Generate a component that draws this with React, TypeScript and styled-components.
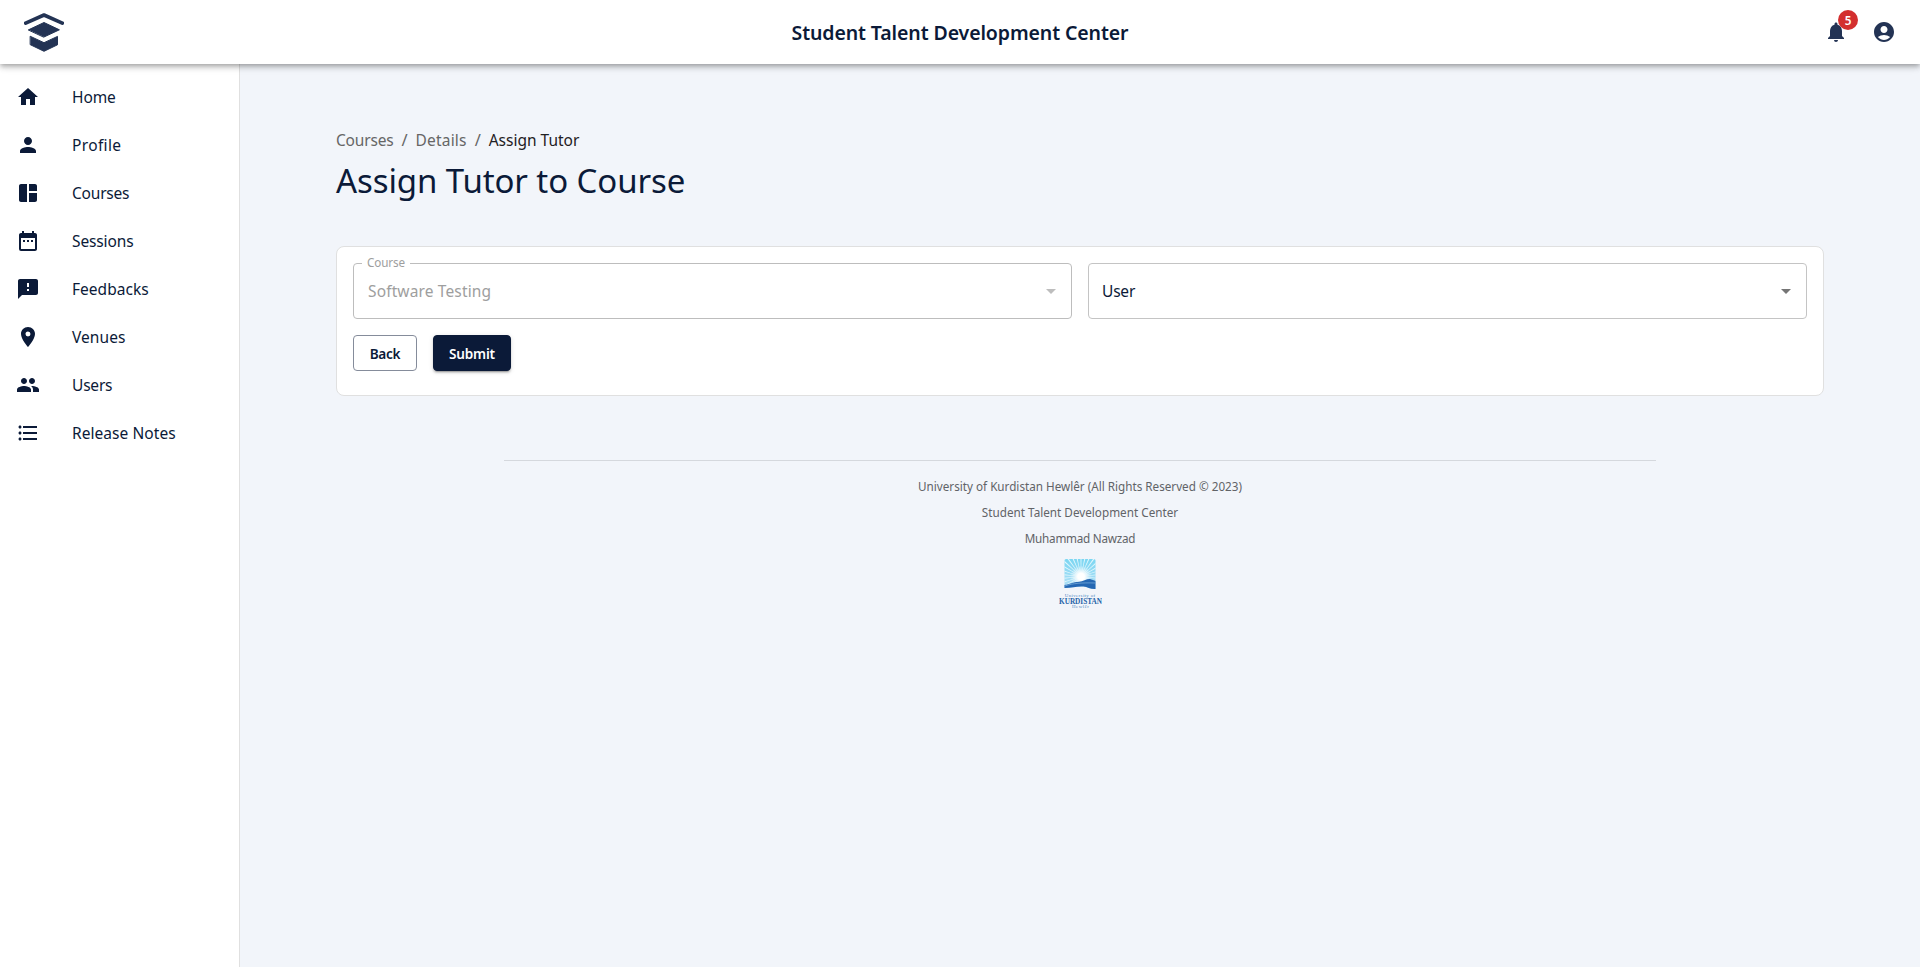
import React from 'react';
import styled, { createGlobalStyle } from 'styled-components';
import type { IconType } from 'react-icons';
import {
  MdAccountCircle,
  MdArrowDropDown,
  MdDateRange,
  MdFeedback,
  MdFormatListBulleted,
  MdHome,
  MdLocationOn,
  MdNotifications,
  MdPeople,
  MdPerson,
  MdSpaceDashboard,
} from 'react-icons/md';

const navy = '#0b1a38';
const slate = '#233354';

const GlobalStyle = createGlobalStyle`
  *, *::before, *::after { box-sizing: border-box; }
  body {
    margin: 0;
    background: #f2f5fa;
    color: ${navy};
    font-family: 'Noto Sans', 'Open Sans', sans-serif;
    font-size: 15.5px;
    line-height: 24px;
  }
`;

const Page = styled.div`
  display: flex;
  flex-direction: column;
  min-height: 100vh;
`;

const Tracked = styled.span<{ $tracking?: number }>`
  letter-spacing: ${({ $tracking = 0 }) => $tracking}px;
  white-space: nowrap;
`;

const AppBar = styled.header`
  position: relative;
  z-index: 2;
  display: grid;
  grid-template-columns: 1fr auto 1fr;
  align-items: center;
  height: 64px;
  padding: 0 24px;
  background: #fff;
  box-shadow: 0 2px 4px -1px rgba(0, 0, 0, 0.2), 0 4px 5px rgba(0, 0, 0, 0.14),
    0 1px 10px rgba(0, 0, 0, 0.12);
`;

const BrandMark = styled.svg`
  display: block;
  width: 40px;
  height: 40px;
`;

const AppTitle = styled.div`
  padding-top: 1px;
  font-size: 19.5px;
  font-weight: 600;
  line-height: 32px;
`;

const Actions = styled.div`
  display: flex;
  justify-content: flex-end;
  gap: 24px;
  color: ${slate};
`;

const ActionButton = styled.button`
  position: relative;
  display: flex;
  padding: 0;
  border: 0;
  background: none;
  color: inherit;
  font-family: inherit;
`;

const Badge = styled.span`
  position: absolute;
  top: -10px;
  right: -10px;
  width: 20px;
  height: 20px;
  border-radius: 10px;
  background: #d32f2f;
  color: #fff;
  font-size: 11.7px;
  font-weight: 600;
  line-height: 21px;
  text-align: center;
`;

const Body = styled.div`
  display: flex;
  flex: 1;
`;

const Sidebar = styled.nav`
  width: 240px;
  flex: none;
  padding-top: 9px;
  border-right: 1px solid #e0e0e0;
  background: #fff;
`;

const NavItem = styled.a`
  display: flex;
  align-items: center;
  gap: 32px;
  height: 48px;
  padding: 0 16px;
  color: ${navy};

  svg { flex: none; }
`;

const Main = styled.main`
  flex: 1;
  padding: 64px 96px 0;
`;

const Breadcrumbs = styled.div`
  display: flex;
  height: 24px;
  color: #666;
`;

const Separator = styled.span`
  width: 6px;
  margin: 0 8px;
  font-size: 16.5px;
  text-align: center;
`;

const Current = styled.span`
  color: #1f2023;
`;

const Heading = styled.h1`
  margin: 7px 0 44px;
  font-size: 33px;
  font-weight: 400;
  line-height: 43px;
`;

const Card = styled.section`
  padding: 16px 16px 24px;
  border: 1px solid #e0e0e0;
  border-radius: 8px;
  background: #fff;
`;

const FieldGrid = styled.div`
  display: grid;
  grid-template-columns: 1fr 1fr;
  gap: 16px;
`;

const Field = styled.div<{ $disabled?: boolean }>`
  position: relative;
  display: flex;
  align-items: center;
  justify-content: space-between;
  height: 56px;
  padding: 0 8px 1px ${({ $disabled }) => ($disabled ? 14 : 13)}px;
  border: 1px solid ${({ $disabled }) => ($disabled ? '#bdbdbd' : '#c4c4c4')};
  border-radius: 4px;
  color: ${({ $disabled }) => ($disabled ? '#9e9e9e' : navy)};

  svg {
    margin-top: 1px;
    color: ${({ $disabled }) => ($disabled ? '#bdbdbd' : '#757575')};
  }
`;

const FieldLabel = styled.label`
  position: absolute;
  top: -12px;
  left: 8px;
  width: 48px;
  background: #fff;
  font-size: 11.7px;
  line-height: 20px;
  text-align: center;
`;

const ButtonRow = styled.div`
  display: flex;
  gap: 16px;
  margin-top: 16px;
`;

const Button = styled.button<{ $primary?: boolean }>`
  height: 36px;
  width: ${({ $primary }) => ($primary ? 78 : 64)}px;
  padding: 1px 0 0;
  border: 1px solid ${({ $primary }) => ($primary ? navy : '#858c9b')};
  border-radius: 4px;
  background: ${({ $primary }) => ($primary ? navy : '#fff')};
  color: ${({ $primary }) => ($primary ? '#fff' : navy)};
  box-shadow: ${({ $primary }) =>
    $primary
      ? '0 3px 1px -2px rgba(0,0,0,.2), 0 2px 2px rgba(0,0,0,.14), 0 1px 5px rgba(0,0,0,.12)'
      : 'none'};
  font-family: inherit;
  font-size: 13.6px;
  font-weight: 600;
  line-height: 24px;
`;

const Footer = styled.footer`
  display: flex;
  flex-direction: column;
  align-items: center;
  width: 1152px;
  margin: 64px auto 0;
  padding-top: 12px;
  border-top: 1px solid #d5d8dd;
  color: #616367;
  font-size: 11.7px;
  line-height: 26px;
`;

const Crest = styled.svg`
  display: block;
  width: 44px;
  height: 52px;
  margin: 7px 1px 0 0;
`;

type NavEntry = { label: string; icon: IconType; tracking: number };

const navEntries: NavEntry[] = [
  { label: 'Home', icon: MdHome, tracking: -0.1 },
  { label: 'Profile', icon: MdPerson, tracking: 0.35 },
  { label: 'Courses', icon: MdSpaceDashboard, tracking: -0.2 },
  { label: 'Sessions', icon: MdDateRange, tracking: -0.12 },
  { label: 'Feedbacks', icon: MdFeedback, tracking: 0.03 },
  { label: 'Venues', icon: MdLocationOn, tracking: 0.07 },
  { label: 'Users', icon: MdPeople, tracking: -0.2 },
  { label: 'Release Notes', icon: MdFormatListBulleted, tracking: 0.06 },
];

function GraduationLogo() {
  return (
    <BrandMark viewBox="0 0 40 40" fill={slate} stroke={slate} strokeLinejoin="round" strokeLinecap="round">
      <path d="M1.700 11.200 20 3l18.300 8.200" fill="none" strokeWidth="3.600" />
      <path d="M4.600 17.800 20 10.500l15.400 7.300L20 25z" strokeWidth="1" />
      <path d="M6.500 24.400 20 30.700l13.500-6.300v8.400L20 39.300 6.500 32.800z" strokeWidth="1" />
    </BrandMark>
  );
}

const rayAngles = Array.from({ length: 30 }, (_, i) => i * 12);

function UniversityCrest() {
  return (
    <Crest viewBox="0 0 44 52">
      <defs>
        <linearGradient id="sky" x1="0" y1="0" x2="0" y2="1">
          <stop offset="0" stopColor="#7ad6f2" />
          <stop offset="1" stopColor="#b5e0f6" />
        </linearGradient>
        <radialGradient id="glow">
          <stop offset="0.3" stopColor="#fff" />
          <stop offset="1" stopColor="#fff" stopOpacity="0" />
        </radialGradient>
        <clipPath id="frame">
          <path d="M8 1h28a1.500 1.500 0 0 1 1.500 1.500V31c-5 .3-8-2-12-2.500C20 28 14 29.500 6.500 30V2.500A1.500 1.500 0 0 1 8 1z" />
        </clipPath>
      </defs>
      <g clipPath="url(#frame)">
        <path d="M6 0h32v32H6z" fill="url(#sky)" />
        {rayAngles.map((angle) => (
          <path
            key={angle}
            d="M23 18.500 L22.200 -10 L23.800 -10 Z"
            fill="#e4f7fd"
            transform={`rotate(${angle} 23 18.500)`}
          />
        ))}
        <circle cx="23" cy="18.500" r="11" fill="url(#glow)" />
        <path d="M6 27c6-.7 9-3 15-3.300 4-.4 8-3 11-2.700l6 2v9H6z" fill="#2467b3" />
        <path d="M7 28c8-2.800 17-3.400 30-3" fill="none" stroke="#8fbfe6" strokeWidth="0.600" />
      </g>
      <g fontFamily="'Liberation Serif', serif" textAnchor="middle">
        <text x="22" y="38.800" fontSize="4.900" fill="#4f86bf" textLength="30.500">University of</text>
        <text x="22.500" y="45.600" fontSize="7.300" fontWeight="700" fill="#2563a8" textLength="43" lengthAdjust="spacingAndGlyphs">KURDISTAN</text>
        <text x="22.500" y="50.300" fontSize="4.900" fill="#4f86bf" textLength="17">Hewlêr</text>
      </g>
    </Crest>
  );
}

export default function App() {
  return (
    <Page>
      <GlobalStyle />
      <AppBar>
        <GraduationLogo />
        <AppTitle>
          <Tracked $tracking={-0.1}>Student Talent Development Center</Tracked>
        </AppTitle>
        <Actions>
          <ActionButton aria-label="Notifications">
            <MdNotifications size={24} />
            <Badge>5</Badge>
          </ActionButton>
          <ActionButton aria-label="Account">
            <MdAccountCircle size={24} />
          </ActionButton>
        </Actions>
      </AppBar>
      <Body>
        <Sidebar>
          {navEntries.map(({ label, icon: Icon, tracking }) => (
            <NavItem key={label}>
              <Icon size={24} />
              <Tracked $tracking={tracking}>{label}</Tracked>
            </NavItem>
          ))}
        </Sidebar>
        <Main>
          <Breadcrumbs>
            <Tracked $tracking={-0.18}>Courses</Tracked>
            <Separator>/</Separator>
            <Tracked $tracking={0.2}>Details</Tracked>
            <Separator>/</Separator>
            <Current>
              <Tracked $tracking={0}>Assign Tutor</Tracked>
            </Current>
          </Breadcrumbs>
          <Heading>
            <Tracked $tracking={-0.1}>Assign Tutor to Course</Tracked>
          </Heading>
          <Card>
            <FieldGrid>
              <Field $disabled>
                <FieldLabel>
                  <Tracked $tracking={-0.1}>Course</Tracked>
                </FieldLabel>
                <Tracked $tracking={0.14}>Software Testing</Tracked>
                <MdArrowDropDown size={24} />
              </Field>
              <Field>
                <Tracked $tracking={-0.2}>User</Tracked>
                <MdArrowDropDown size={24} />
              </Field>
            </FieldGrid>
            <ButtonRow>
              <Button>
                <Tracked $tracking={-0.25}>Back</Tracked>
              </Button>
              <Button $primary>
                <Tracked $tracking={-0.22}>Submit</Tracked>
              </Button>
            </ButtonRow>
          </Card>
          <Footer>
            <Tracked>University of Kurdistan Hewlêr (All Rights Reserved © 2023)</Tracked>
            <Tracked $tracking={0.015}>Student Talent Development Center</Tracked>
            <Tracked $tracking={-0.24}>Muhammad Nawzad</Tracked>
            <UniversityCrest />
          </Footer>
        </Main>
      </Body>
    </Page>
  );
}
